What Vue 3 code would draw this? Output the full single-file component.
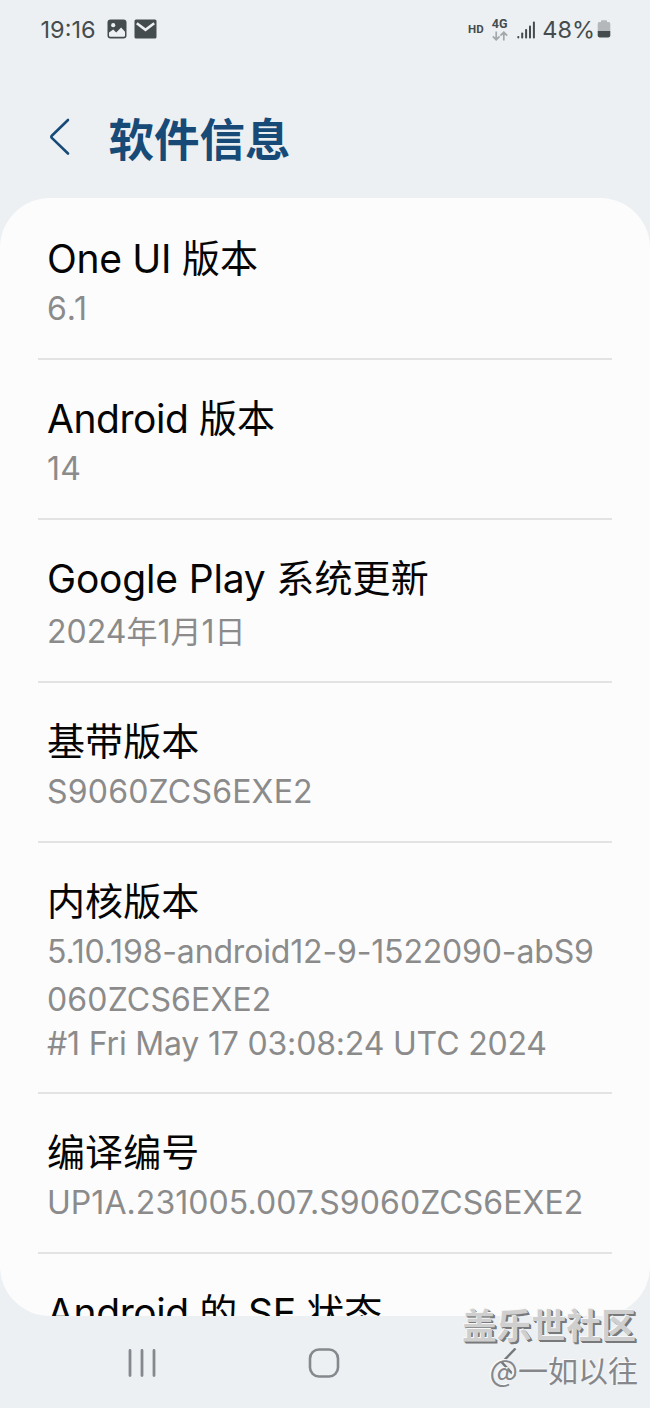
<template>
  <div class="screen">
    <header class="status-bar">
      <div class="status-left">
        <span class="clock">19:16</span>
        <svg class="icon-image" width="20" height="20" viewBox="0 0 20 20">
          <rect x="0.5" y="0.5" width="19" height="19" rx="3" fill="#454c4d" />
          <circle cx="6.2" cy="6.2" r="2.1" fill="#ecf0f3" />
          <path d="M2 13.6 6.2 10.4l3 3 4.9-4.9 3.9 4.2v3.8a1.3 1.3 0 0 1-1.3 1.3H3.3A1.3 1.3 0 0 1 2 16.5z" fill="#ecf0f3" />
        </svg>
        <svg class="icon-mail" width="23" height="20" viewBox="0 0 23 20">
          <rect x="0.5" y="0.5" width="22" height="19" rx="1.5" fill="#454c4d" />
          <path d="M2.8 4.2l8.7 6.6 8.7-6.6" fill="none" stroke="#ecf0f3" stroke-width="2.6" />
        </svg>
      </div>
      <div class="status-right">
        <span class="hd">HD</span>
        <div class="network">
          <span class="net-label">4G</span>
          <svg width="16" height="10" viewBox="0 0 16 10" fill="none" stroke="#a4a8aa" stroke-width="1.7">
            <path d="M4.2 0.5v8M0.8 5.3l3.4 3.4 3.4-3.4M11.8 9.5v-8M8.4 4.7l3.4-3.4 3.4 3.4" />
          </svg>
        </div>
        <svg class="signal" width="19" height="18" viewBox="0 0 19 18" fill="#454c4d">
          <rect x="0.3" y="15" width="2" height="2.4" rx="0.8" />
          <rect x="4.2" y="11.5" width="2" height="6" rx="0.8" />
          <rect x="8.1" y="8" width="2" height="9.5" rx="0.8" />
          <rect x="12" y="4.5" width="2" height="13" rx="0.8" />
          <rect x="15.9" y="0.6" width="2" height="17" rx="0.8" />
        </svg>
        <span class="percent">48%</span>
        <svg class="battery" width="14" height="18" viewBox="0 0 14 18">
          <path d="M4 2V1a.8.8 0 0 1 .8-.8h4.4a.8.8 0 0 1 .8.8v1h1.5A1.8 1.8 0 0 1 13.3 3.8V11H.7V3.8A1.8 1.8 0 0 1 2.5 2z" fill="#b4b8ba" />
          <path d="M.7 11h12.6v4.6a1.8 1.8 0 0 1-1.8 1.8h-9A1.8 1.8 0 0 1 .7 15.6z" fill="#454c4d" />
        </svg>
      </div>
    </header>

    <div class="title-bar">
      <svg width="22" height="38" viewBox="0 0 22 38">
        <path d="M19 2 2.8 17.7a1.5 1.5 0 0 0 0 2.2L19 35.500" fill="none" stroke="#174a77" stroke-width="2.6" stroke-linecap="round" />
      </svg>
      <h1>软件信息</h1>
    </div>

    <main class="card">
      <section v-for="item in items" :key="item.title" class="row">
        <div class="row-title" :style="{ letterSpacing: item.tracking + 'px' }">
          <span v-for="(run, i) in runs(item.title)" :key="i" :class="{ cjk: run.cjk }">{{ run.text }}</span>
        </div>
        <div
          v-for="line in item.lines"
          :key="line.text"
          class="row-value"
          :class="{ tall: item.tall }"
          :style="{ letterSpacing: line.tracking + 'px' }"
        >
          <span v-for="(run, i) in runs(line.text)" :key="i" :class="{ cjk: run.cjk }">{{ run.text }}</span>
        </div>
      </section>
    </main>

    <nav class="nav-bar">
      <svg width="30" height="30" viewBox="0 0 30 30" stroke="#85898d" stroke-width="2.8" stroke-linecap="round">
        <path d="M3 2.4v25.200M15 2.400v25.200M27 2.400v25.200" />
      </svg>
      <svg class="home" width="32" height="30" viewBox="0 0 32 30" fill="none" stroke="#85898d" stroke-width="2.6">
        <rect x="2" y="1.5" width="28" height="27" rx="9" />
      </svg>
      <svg width="18" height="30" viewBox="0 0 18 30" fill="none" stroke="#76797c" stroke-width="2.4">
        <path d="M16.500 0.500 3 14.500l13 14" />
      </svg>
    </nav>

    <div class="watermark">
      <div class="wm-site">盖乐世社区</div>
      <div class="wm-user">@一如以往</div>
    </div>
  </div>
</template>

<script setup>
const items = [
  { title: 'One UI 版本', tracking: -0.3, lines: [{ text: '6.1', tracking: 0.9 }] },
  { title: 'Android 版本', tracking: -0.45, lines: [{ text: '14', tracking: 0.2 }] },
  { title: 'Google Play 系统更新', tracking: -0.18, lines: [{ text: '2024年1月1日', tracking: 0 }], tall: true },
  { title: '基带版本', tracking: 0, lines: [{ text: 'S9060ZCS6EXE2', tracking: 0.2 }] },
  {
    title: '内核版本',
    tracking: 0,
    lines: [
      { text: '5.10.198-android12-9-1522090-abS9', tracking: -0.16 },
      { text: '060ZCS6EXE2', tracking: 0.15 },
      { text: '#1 Fri May 17 03:08:24 UTC 2024', tracking: -0.18 }
    ]
  },
  { title: '编译编号', tracking: 0, lines: [{ text: 'UP1A.231005.007.S9060ZCS6EXE2', tracking: 0.06 }] },
  { title: 'Android 的 SE 状态', tracking: -0.4, lines: [] }
]

// Latin and Chinese runs are set at slightly different sizes
function runs(text) {
  return text.match(/[\u4e00-\u9fff]+|[^\u4e00-\u9fff]+/g).map(t => ({
    text: t,
    cjk: /[\u4e00-\u9fff]/.test(t)
  }))
}
</script>

<style>
body { margin: 0; background: #ecf0f3; }
</style>

<style scoped>
.screen {
  position: relative;
  display: flex;
  flex-direction: column;
  width: 650px;
  height: 1408px;
  overflow: hidden;
  background: #ecf0f3;
  font-family: Inter, "Noto Sans CJK SC", sans-serif;
}

.status-bar {
  display: flex;
  justify-content: space-between;
  align-items: center;
  height: 58px;
  padding: 0 39px 0 40.5px;
  color: #454c4d;
}
.status-left, .status-right { display: flex; align-items: center; }
.clock, .percent { font-size: 23.5px; line-height: 28px; padding-top: 1px; }
.icon-image { margin-left: 11px; }
.icon-mail { margin-left: 7px; }
.hd { font: 700 11.5px/12px Roboto, sans-serif; }
.network {
  display: flex;
  flex-direction: column;
  align-items: center;
  gap: 2px;
  margin-left: 8px;
}
.net-label { font: 700 12.5px/11px Roboto, sans-serif; }
.signal { margin-left: 9px; margin-top: 2px; }
.percent { margin-left: 6.5px; }
.battery { margin-left: 2px; }

.title-bar {
  display: flex;
  align-items: center;
  box-sizing: border-box;
  height: 140px;
  padding: 18px 0 0 49px;
}
h1 {
  margin: 0 0 1px 37.5px;
  font: 700 45.5px/60px "Noto Sans CJK SC", sans-serif;
  color: #174a77;
}

.card {
  box-sizing: border-box;
  height: 1118px;
  padding: 2px 38px 0;
  overflow: hidden;
  background: #fcfcfc;
  border-radius: 50px;
}
.row {
  padding: 35px 0 27px 9px;
  border-bottom: 2px solid #e3e3e4;
}
.row-title {
  height: 48px;
  font-size: 39px;
  line-height: 48px;
  color: #050505;
  white-space: pre;
}
.row-title .cjk {
  font-family: "Noto Sans CJK SC", sans-serif;
  font-size: 38px;
  line-height: 0;
  letter-spacing: 0.1px;
  vertical-align: 1px;
}
.row-value {
  height: 44px;
  margin-top: 4px;
  font-size: 32px;
  line-height: 44px;
  color: #8b8b8b;
  white-space: pre;
}
.row-value + .row-value + .row-value { margin: 0 0 -1px; }
.row-value.tall { margin-top: 7px; }
.row-value .cjk {
  font-family: "Noto Sans CJK SC", sans-serif;
  font-size: 31px;
  line-height: 0;
}

.nav-bar {
  display: flex;
  align-items: center;
  justify-content: space-between;
  height: 92px;
  padding: 2px 133px 0 127px;
  box-sizing: border-box;
}
.home { margin-right: 9px; }

.watermark {
  position: absolute;
  right: 12px;
  bottom: 17px;
  text-align: right;
  font-family: "Noto Sans CJK SC", sans-serif;
}
.wm-site {
  margin-right: 2px;
  font-size: 34.8px;
  line-height: 46px;
  font-weight: 700;
  color: #cfcfcf;
  text-shadow: -1px -1px 0 #f8f8f8, 1px 1px 0 #77797b, 2px 2px 0 #77797b;
}
.wm-user {
  font-size: 30px;
  line-height: 44px;
  color: #85878a;
  text-shadow: -1px -1px 0 #fafafa, -2px -1px 0 #f4f5f6;
}
</style>
